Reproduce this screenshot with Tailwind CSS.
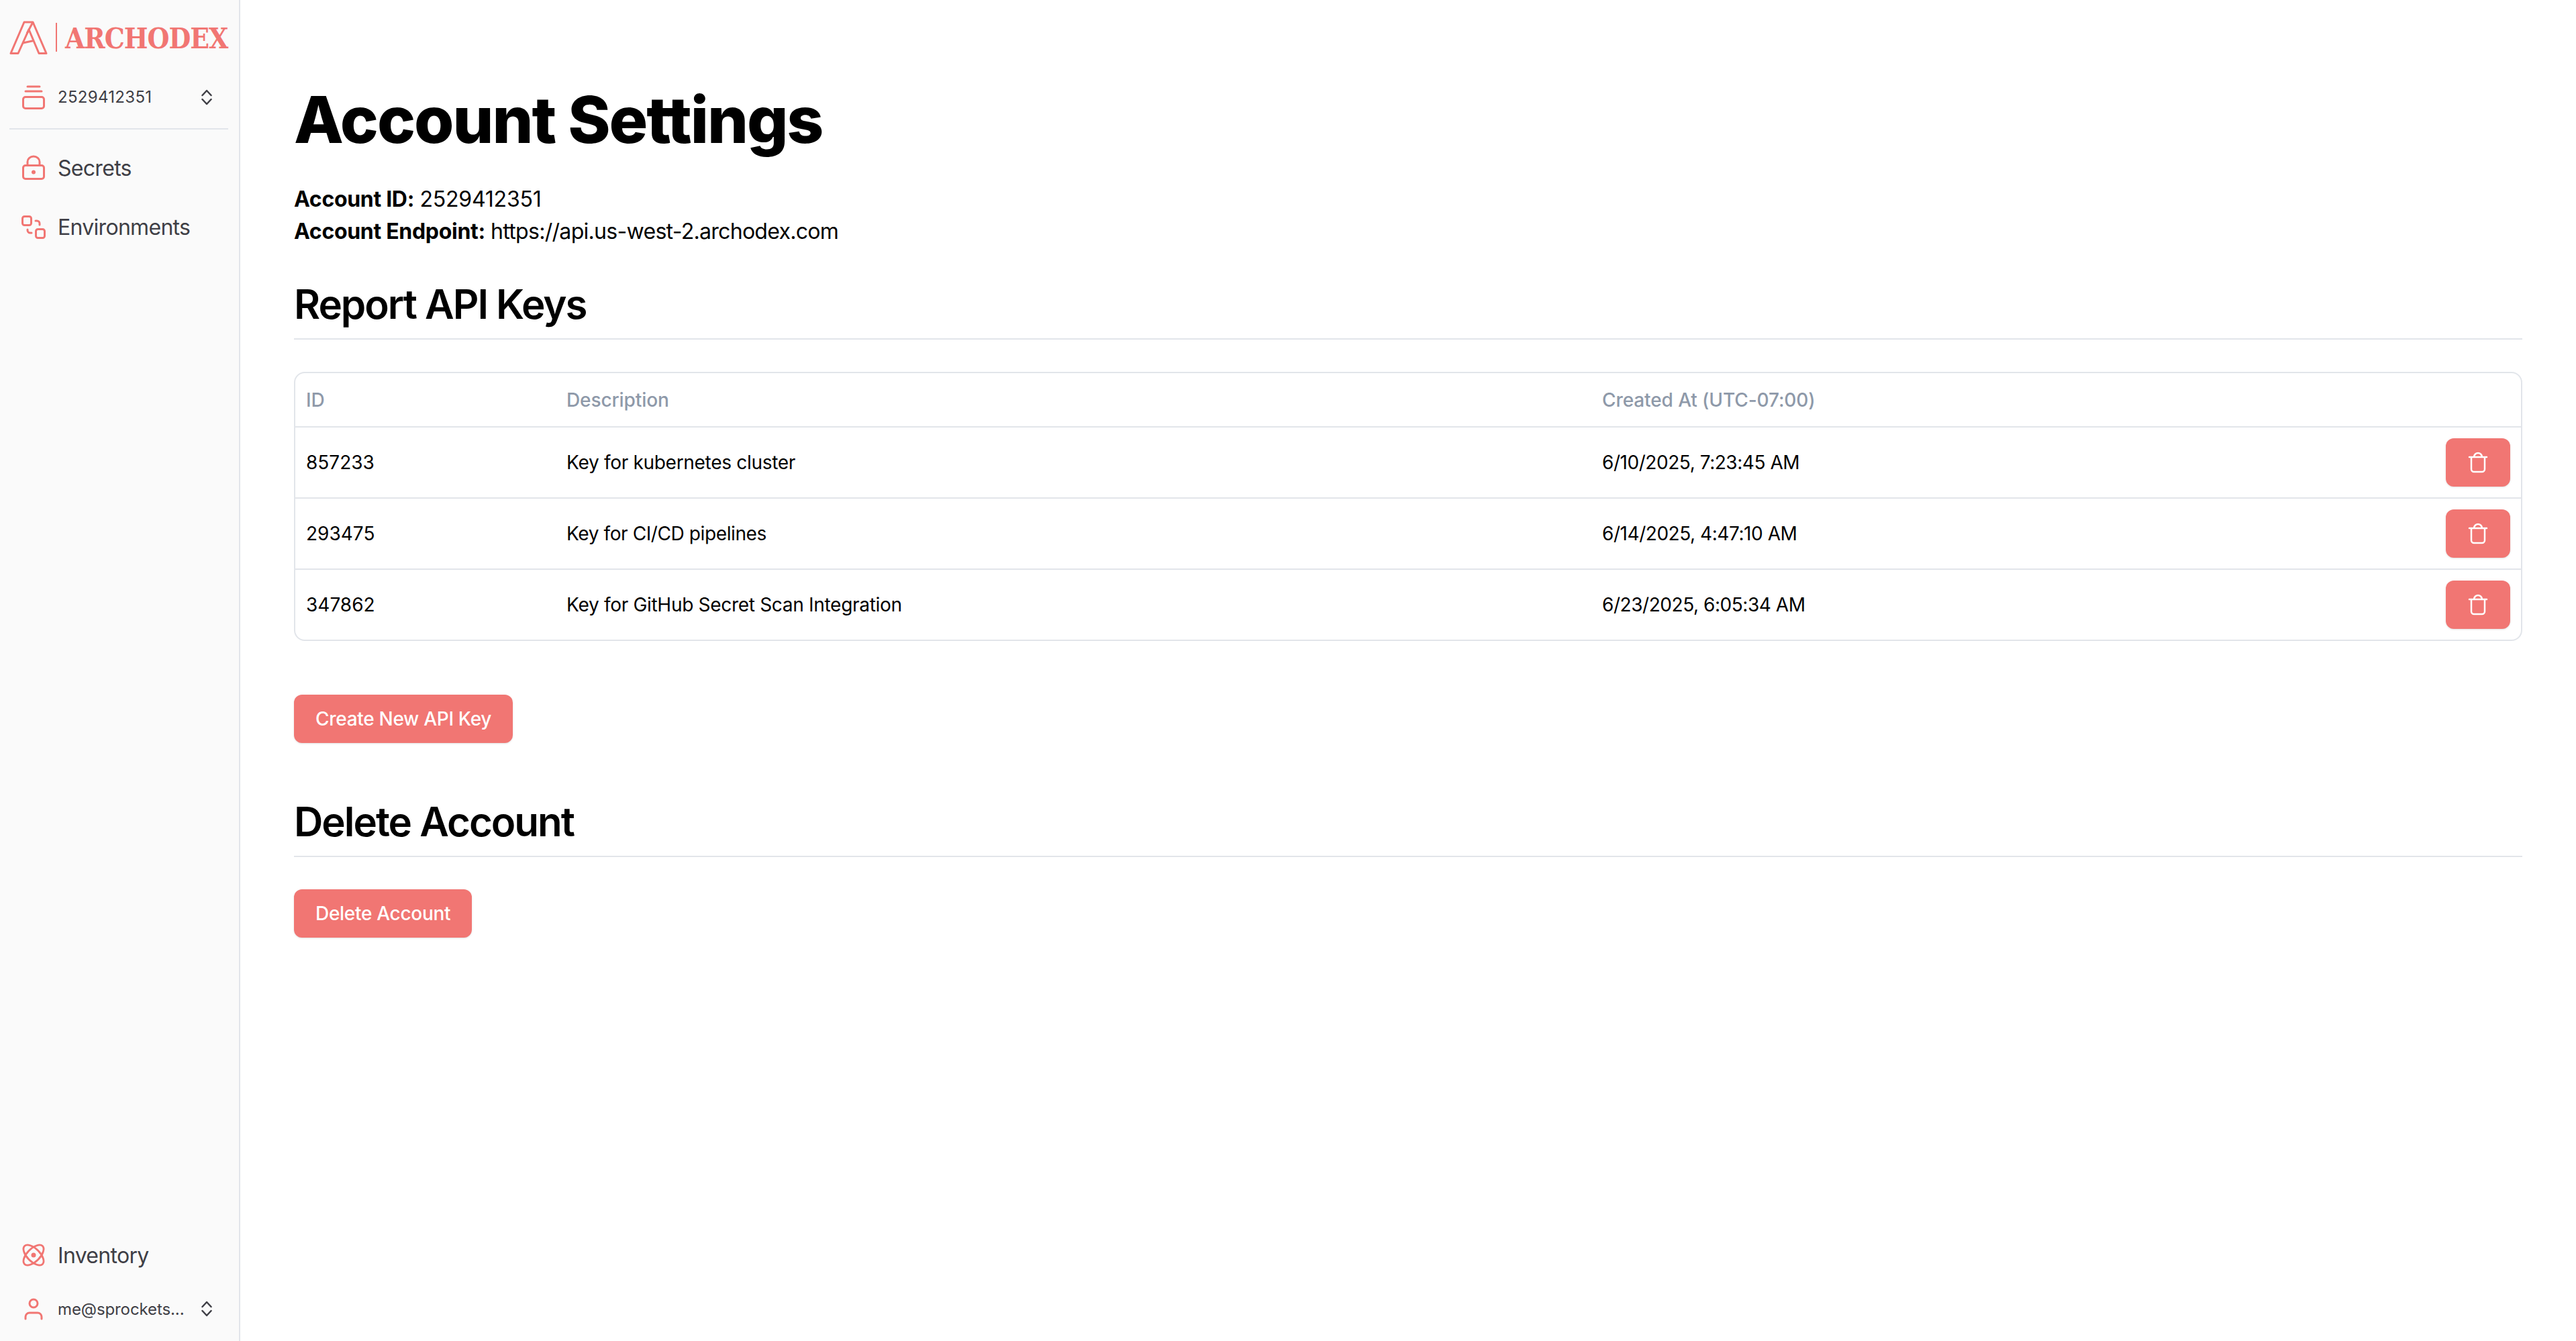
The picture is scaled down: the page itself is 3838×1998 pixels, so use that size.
<!DOCTYPE html>
<html lang="en">
<head>
    <meta charset="UTF-8">
    <title>Account Settings</title>
    <script src="https://cdn.jsdelivr.net/npm/@tailwindcss/browser@4"></script>
</head>
<body class="bg-white text-black font-['Inter',sans-serif] h-[1998px] overflow-hidden flex">
    <!-- sidebar -->
    <aside class="w-[358px] shrink-0 h-full bg-[#fafafa] border-r-2 border-[#e2e5ea] pl-[14px] pr-[16px] flex flex-col justify-between text-[#3f3f46]">
        <div>
            <div class="h-[100px] flex items-start pt-[31px] gap-[12px]">
                <svg class="w-[57px] h-[50px] shrink-0" viewBox="0 0 57 50" fill="none" stroke="#f17673" stroke-width="3" stroke-linejoin="round">
                    <path d="M2 48.500 L22 2 H35 L55 48.500 H44 L29 13 L13 48.500 Z"/>
                    <path d="M35 2 L26 19 M20 33 L36.500 29.500"/>
                </svg>
                <div class="w-[2px] h-[43px] mt-[3px] bg-[#f17673]"></div>
                <span class="font-['DejaVu_Serif_Condensed','DejaVu_Serif',serif] font-bold text-[42px] leading-[50px] mt-[2px] text-[#f17673] tracking-[-1px]">ARCHODEX</span>
            </div>
            <div class="h-[93px] border-b-2 border-[#e2e5ea] px-[16px] flex items-center gap-[16px] pb-[2px]">
                <svg class="w-[40px] h-[40px] shrink-0" viewBox="0 0 40 40" fill="none" stroke="#f17673" stroke-width="3" stroke-linecap="round">
                    <rect x="4.500" y="19.500" width="31" height="17" rx="3.500"/>
                    <path d="M11 4h18M8 11h24"/>
                </svg>
                <span class="text-[24px] flex-1 tracking-[0.3px]">2529412351</span>
                <svg class="w-[16px] h-[24px] mr-[8px]" viewBox="0 0 16 24" fill="none" stroke="#3f3f46" stroke-width="2.500" stroke-linecap="round" stroke-linejoin="round">
                    <path d="M1.500 9l6.500-7 6.500 7M1.500 15l6.500 7 6.500-7"/>
                </svg>
            </div>
            <nav class="mt-[13px] text-[32px] tracking-[-0.7px]">
                <a class="h-[88px] px-[16px] flex items-center gap-[16px]">
                    <svg class="w-[40px] h-[40px] shrink-0" viewBox="0 0 40 40" fill="none" stroke="#f17673" stroke-width="3" stroke-linecap="round">
                        <rect x="4.500" y="16.500" width="31" height="20" rx="3.500"/>
                        <path d="M11 16v-5a9 8 0 0 1 18 0v5"/>
                        <circle cx="20" cy="26.500" r="3" fill="#f17673" stroke="none"/>
                    </svg>
                    <span class="pt-[2px]">Secrets</span>
                </a>
                <a class="h-[88px] px-[16px] flex items-center gap-[16px]">
                    <svg class="w-[40px] h-[40px] shrink-0" viewBox="0 0 40 40" fill="none" stroke="#f17673" stroke-width="3" stroke-linecap="round">
                        <rect x="3.500" y="4.500" width="13" height="13" rx="3"/>
                        <rect x="23.500" y="23.500" width="13" height="13" rx="3"/>
                        <path d="M23 11h2a4 4 0 0 1 4 4v2M17 29h-2a4 4 0 0 1-4-4v-1"/>
                    </svg>
                    <span class="pt-[2px]">Environments</span>
                </a>
            </nav>
        </div>
        <div>
            <a class="h-[88px] px-[16px] flex items-center gap-[16px] text-[32px] tracking-[-0.7px]">
                <svg class="w-[40px] h-[40px] shrink-0" viewBox="0 0 40 40" fill="none" stroke="#f17673" stroke-width="3">
                    <ellipse cx="20" cy="20" rx="20" ry="10" transform="translate(20 20) rotate(45) scale(.95) translate(-20 -20)"/>
                    <ellipse cx="20" cy="20" rx="20" ry="10" transform="translate(20 20) rotate(-45) scale(.95) translate(-20 -20)"/>
                    <circle cx="20" cy="20" r="3.500" fill="#f17673" stroke="none"/>
                </svg>
                <span class="pt-[2px]">Inventory</span>
            </a>
            <div class="h-[72px] px-[16px] flex items-center gap-[16px] mb-[12px]">
                <svg class="w-[40px] h-[40px] shrink-0" viewBox="0 0 40 40" fill="none" stroke="#f17673" stroke-width="3" stroke-linecap="round">
                    <circle cx="20" cy="12" r="6"/>
                    <path d="M8 35v-3a6 6 0 0 1 6-6h12a6 6 0 0 1 6 6v3"/>
                </svg>
                <span class="text-[24px] flex-1 whitespace-nowrap tracking-[-0.1px] pt-[1px]">me@sprockets...</span>
                <svg class="w-[16px] h-[24px] mr-[8px]" viewBox="0 0 16 24" fill="none" stroke="#3f3f46" stroke-width="2.500" stroke-linecap="round" stroke-linejoin="round">
                    <path d="M1.500 9l6.500-7 6.500 7M1.500 15l6.500 7 6.500-7"/>
                </svg>
            </div>
        </div>
    </aside>

    <!-- main -->
    <main class="flex-1 px-[80px] pt-[138px]">
        <h1 class="text-[96px] leading-[80px] font-extrabold tracking-[-2px]">Account Settings</h1>
        <div class="mt-[55px] text-[32px] leading-[48px] tracking-[-0.7px]">
            <p><b class="font-bold tracking-[-0.3px]">Account ID:</b> <span class="tracking-[-0.2px]">2529412351</span></p>
            <p><b class="font-bold tracking-[-0.3px]">Account Endpoint:</b> https://api.us-west-2.archodex.com</p>
        </div>
        <h2 class="mt-[52px] text-[60px] leading-[64px] font-semibold tracking-[-2px] pb-[19px] border-b-2 border-[#e2e5ea]">Report API Keys</h2>
        <div class="mt-[48px] border-2 border-[#e2e5ea] rounded-[16px] overflow-hidden">
            <table class="w-full table-fixed text-[28px] text-left">
                <thead>
                    <tr class="h-[80px] text-[#8e99a9] tracking-[-0.1px]">
                        <th class="w-[388px] pl-[16px] font-medium">ID</th>
                        <th class="w-[1543px] pl-[16px] font-medium">Description</th>
                        <th class="pl-[16px] font-medium">Created At (UTC-07:00)</th>
                        <th class="w-[128px]"></th>
                    </tr>
                </thead>
                <tbody class="tracking-[-0.3px]">
                    <tr class="h-[106px] border-t-2 border-[#e2e5ea]">
                        <td class="pl-[16px] tracking-normal">857233</td>
                        <td class="pl-[16px]">Key for kubernetes cluster</td>
                        <td class="pl-[16px] tracking-[-0.45px]">6/10/2025, 7:23:45 AM</td>
                        <td class="pr-[16px] text-right">
                            <button class="w-[96px] h-[72px] inline-flex items-center justify-center align-middle rounded-[12px] bg-[#f17673] shadow-sm">
                                <svg class="w-[32px] h-[32px]" viewBox="0 0 32 32" fill="none" stroke="#fff" stroke-width="2.500" stroke-linecap="round" stroke-linejoin="round">
                                    <path d="M3 8h26M6 8v18a4 4 0 0 0 4 4h12a4 4 0 0 0 4-4V8M10 8a6 6 0 0 1 12 0"/>
                                </svg>
                            </button>
                        </td>
                    </tr>
                    <tr class="h-[106px] border-t-2 border-[#e2e5ea]">
                        <td class="pl-[16px] tracking-normal">293475</td>
                        <td class="pl-[16px] tracking-[-0.4px]">Key for CI/CD pipelines</td>
                        <td class="pl-[16px] tracking-[-0.45px]">6/14/2025, 4:47:10 AM</td>
                        <td class="pr-[16px] text-right">
                            <button class="w-[96px] h-[72px] inline-flex items-center justify-center align-middle rounded-[12px] bg-[#f17673] shadow-sm">
                                <svg class="w-[32px] h-[32px]" viewBox="0 0 32 32" fill="none" stroke="#fff" stroke-width="2.500" stroke-linecap="round" stroke-linejoin="round">
                                    <path d="M3 8h26M6 8v18a4 4 0 0 0 4 4h12a4 4 0 0 0 4-4V8M10 8a6 6 0 0 1 12 0"/>
                                </svg>
                            </button>
                        </td>
                    </tr>
                    <tr class="h-[105px] border-t-2 border-[#e2e5ea]">
                        <td class="pl-[16px] tracking-normal">347862</td>
                        <td class="pl-[16px]">Key for GitHub Secret Scan Integration</td>
                        <td class="pl-[16px] tracking-[-0.45px]">6/23/2025, 6:05:34 AM</td>
                        <td class="pr-[16px] text-right">
                            <button class="w-[96px] h-[72px] inline-flex items-center justify-center align-middle rounded-[12px] bg-[#f17673] shadow-sm">
                                <svg class="w-[32px] h-[32px]" viewBox="0 0 32 32" fill="none" stroke="#fff" stroke-width="2.500" stroke-linecap="round" stroke-linejoin="round">
                                    <path d="M3 8h26M6 8v18a4 4 0 0 0 4 4h12a4 4 0 0 0 4-4V8M10 8a6 6 0 0 1 12 0"/>
                                </svg>
                            </button>
                        </td>
                    </tr>
                </tbody>
            </table>
        </div>
        <button class="mt-[80px] h-[72px] px-[32px] rounded-[12px] bg-[#f17673] shadow-sm text-white text-[28px] font-medium tracking-[-0.3px] block">Create New API Key</button>
        <h2 class="mt-[85px] text-[60px] leading-[64px] font-semibold tracking-[-2px] pb-[19px] border-b-2 border-[#e2e5ea]">Delete Account</h2>
        <button class="mt-[48px] h-[72px] px-[32px] rounded-[12px] bg-[#f17673] shadow-sm text-white text-[28px] font-medium tracking-[-0.3px] block">Delete Account</button>
    </main>
</body>
</html>
